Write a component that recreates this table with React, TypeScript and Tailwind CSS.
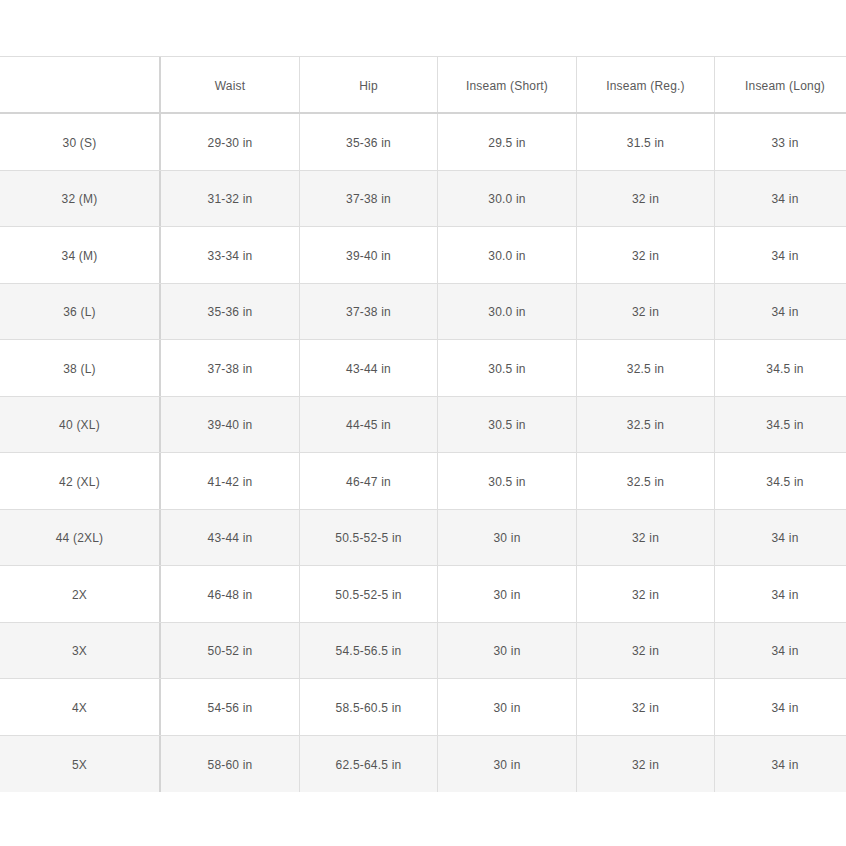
const HEADERS = ['', 'Waist', 'Hip', 'Inseam (Short)', 'Inseam (Reg.)', 'Inseam (Long)'];

const ROWS: string[][] = [
  ['30 (S)', '29-30 in', '35-36 in', '29.5 in', '31.5 in', '33 in'],
  ['32 (M)', '31-32 in', '37-38 in', '30.0 in', '32 in', '34 in'],
  ['34 (M)', '33-34 in', '39-40 in', '30.0 in', '32 in', '34 in'],
  ['36 (L)', '35-36 in', '37-38 in', '30.0 in', '32 in', '34 in'],
  ['38 (L)', '37-38 in', '43-44 in', '30.5 in', '32.5 in', '34.5 in'],
  ['40 (XL)', '39-40 in', '44-45 in', '30.5 in', '32.5 in', '34.5 in'],
  ['42 (XL)', '41-42 in', '46-47 in', '30.5 in', '32.5 in', '34.5 in'],
  ['44 (2XL)', '43-44 in', '50.5-52-5 in', '30 in', '32 in', '34 in'],
  ['2X', '46-48 in', '50.5-52-5 in', '30 in', '32 in', '34 in'],
  ['3X', '50-52 in', '54.5-56.5 in', '30 in', '32 in', '34 in'],
  ['4X', '54-56 in', '58.5-60.5 in', '30 in', '32 in', '34 in'],
  ['5X', '58-60 in', '62.5-64.5 in', '30 in', '32 in', '34 in'],
];

const COLS = 'grid grid-cols-[161px_139px_138px_139px_138px_140px]';

function Cell({ text, first, last }: { text: string; first: boolean; last: boolean }) {
  return (
    <div
      className={
        'flex items-center justify-center pt-[2px] ' +
        (first ? 'border-r-2 border-r-[#d4d4d4] ' : last ? '' : 'border-r border-r-[#dedede] ')
      }
    >
      {text}
    </div>
  );
}

export default function App() {
  return (
    <div className="w-[846px] h-[846px] overflow-hidden bg-white font-['Liberation_Sans',Arial,sans-serif] text-[12px] tracking-[0.2px] text-[#555]">
      <div className="w-[855px] mt-[56px] border-t border-[#dedede]">
        {/* header */}
        <div className={COLS + ' h-[57px] border-b-2 border-[#d4d4d4] text-[#5a5a5a]'}>
          {HEADERS.map((h, i) => (
            <Cell key={i} text={h} first={i === 0} last={i === HEADERS.length - 1} />
          ))}
        </div>

        {/* body */}
        {ROWS.map((row, r) => (
          <div
            key={r}
            className={
              COLS +
              ' h-[56.5px] ' +
              (r % 2 === 1 ? 'bg-[#f5f5f5] ' : 'bg-white ') +
              (r < ROWS.length - 1 ? 'border-b border-[#dedede]' : '')
            }
          >
            {row.map((c, i) => (
              <Cell key={i} text={c} first={i === 0} last={i === row.length - 1} />
            ))}
          </div>
        ))}
      </div>
    </div>
  );
}
